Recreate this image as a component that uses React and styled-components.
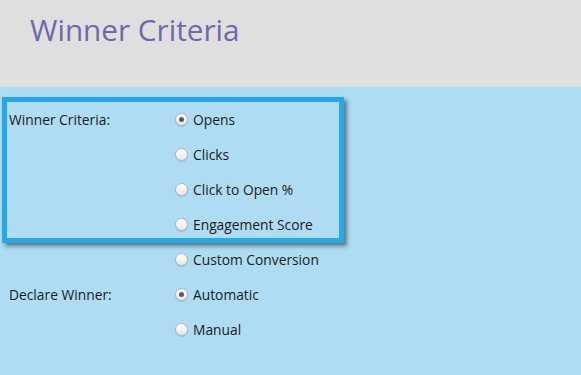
import React from 'react';
import styled, { createGlobalStyle } from 'styled-components';

const GlobalStyle = createGlobalStyle`
  html, body {
    margin: 0;
    padding: 0;
    background: #aedcf3;
  }
  body {
    font-family: "Open Sans", "DejaVu Sans", sans-serif;
  }
`;

const Page = styled.div`
  width: 581px;
  height: 375px;
  overflow: hidden;
  background: #aedcf3;
`;

const Header = styled.div`
  height: 87px;
  background: #dfdfdf;
  padding: 10px 0 0 30px;
  box-sizing: border-box;
`;

const Title = styled.h1`
  margin: 0;
  font-weight: 400;
  font-size: 29.7px;
  line-height: 40px;
  color: #6e69ad;
`;

const Form = styled.div`
  position: relative;
  padding-top: 15px;
`;

const Row = styled.div`
  display: flex;
  align-items: center;
  height: 35px;
`;

const Label = styled.div`
  width: 166px;
  padding-left: 9px;
  font-size: 13.8px;
  color: #1b1b1b;
`;

const Option = styled.label`
  display: flex;
  align-items: center;
  gap: 5px;
  font-size: 13.8px;
  color: #1b1b1b;
`;

const Radio = styled.span`
  width: 13px;
  height: 13px;
  box-sizing: border-box;
  border-radius: 50%;
  border: 1px solid #b3b3b3;
  background: linear-gradient(#ffffff, #e6e6e6);
  box-shadow: 0 1px 1px rgba(0, 0, 0, 0.12);
  display: flex;
  align-items: center;
  justify-content: center;

  &::after {
    content: '';
    width: 5px;
    height: 5px;
    border-radius: 50%;
    background: ${props => (props.checked ? '#5a5a5a' : 'transparent')};
  }
`;

const Highlight = styled.div`
  position: absolute;
  left: 2px;
  top: 10px;
  width: 342px;
  height: 146px;
  box-sizing: border-box;
  border: 5px solid #27a8e7;
  box-shadow: 3px 3px 4px rgba(40, 50, 60, 0.6);
  pointer-events: none;
`;

const rows = [
  { label: 'Winner Criteria:', text: 'Opens', checked: true },
  { text: 'Clicks' },
  { text: 'Click to Open %' },
  { text: 'Engagement Score' },
  { text: 'Custom Conversion' },
  { label: 'Declare Winner:', text: 'Automatic', checked: true },
  { text: 'Manual' },
];

export default function App() {
  return (
    <Page>
      <GlobalStyle />
      <Header>
        <Title>Winner Criteria</Title>
      </Header>
      <Form>
        {rows.map((r, i) => (
          <Row key={i}>
            <Label>{r.label}</Label>
            <Option>
              <Radio checked={r.checked} />
              {r.text}
            </Option>
          </Row>
        ))}
        <Highlight />
      </Form>
    </Page>
  );
}
